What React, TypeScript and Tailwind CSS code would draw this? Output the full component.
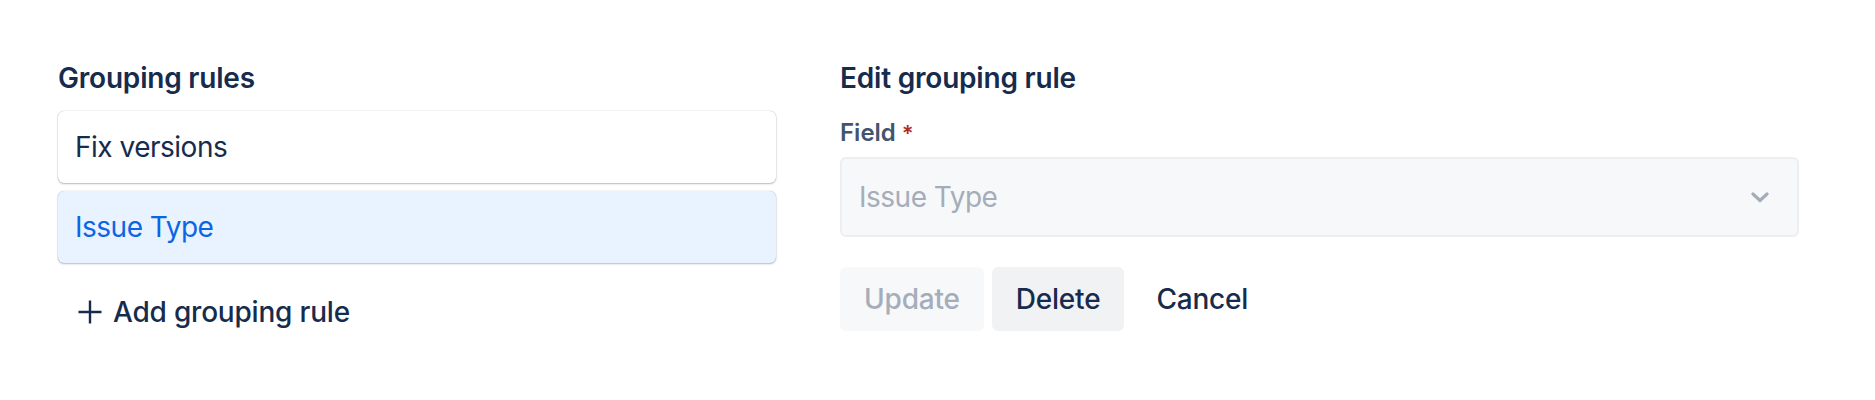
import React from "react";

function PlusIcon() {
  return (
    <svg width="24" height="24" viewBox="0 0 24 24" className="shrink-0">
      <path d="M12 0.5v23M0.5 12h23" stroke="#172B4D" strokeWidth="2.4" strokeLinecap="butt" fill="none" />
    </svg>
  );
}

function Chevron() {
  return (
    <svg width="18" height="11" viewBox="0 0 18 11" className="shrink-0">
      <path d="M2 2l7 6.5L16 2" stroke="#A5ADBA" strokeWidth="3.2" strokeLinecap="round" strokeLinejoin="round" fill="none" />
    </svg>
  );
}

export default function App() {
  return (
    <div
      className="w-[1875px] h-[400px] bg-white text-[#172B4D]"
      style={{ fontFamily: "Inter, 'Noto Sans', sans-serif" }}
    >
      <div className="flex gap-[64px] pl-[58px] pt-[62px]">
        {/* Left column */}
        <div className="w-[718px] flex flex-col">
          <h2 className="text-[28px] leading-[32px] font-semibold tracking-[-0.2px] text-[#172B4D]">Grouping rules</h2>
          <div className="mt-[17px] flex flex-col gap-[8px]">
            <div className="h-[72px] rounded-[6px] bg-white px-[17px] flex items-center shadow-[0_1px_2px_rgba(9,30,66,0.28),0_0_1px_rgba(9,30,66,0.35)]">
              <span className="text-[28px] leading-[40px] tracking-[-0.5px] text-[#172B4D]">Fix versions</span>
            </div>
            <div className="h-[72px] rounded-[6px] bg-[#E9F2FF] px-[17px] flex items-center shadow-[0_1px_2px_rgba(9,30,66,0.28),0_0_1px_rgba(9,30,66,0.35)]">
              <span className="text-[28px] leading-[40px] tracking-[-0.5px] text-[#0C66E4]">Issue Type</span>
            </div>
          </div>
          <div className="mt-[17px] flex">
            <button className="h-[64px] pl-[20px] pr-[20px] flex items-center gap-[11px] rounded-[6px]">
              <PlusIcon />
              <span className="text-[28px] leading-[40px] font-medium tracking-[-0.2px] text-[#172B4D]">Add grouping rule</span>
            </button>
          </div>
        </div>

        {/* Right column */}
        <div className="w-[959px] flex flex-col">
          <h2 className="text-[28px] leading-[32px] font-semibold tracking-[-0.2px] text-[#172B4D]">Edit grouping rule</h2>
          <div className="mt-[23px] flex items-center gap-[6px]">
            <span className="text-[24px] leading-[32px] font-semibold text-[#44546F]">Field</span>
            <span className="text-[22px] leading-[32px] font-semibold text-[#AE2E24]">*</span>
          </div>
          <div className="mt-[8px] h-[80px] rounded-[6px] border-2 border-[#EDEEF0] bg-[#F7F8F9] pl-[17px] pr-[28px] flex items-center justify-between">
            <span className="text-[28px] leading-[40px] tracking-[-0.5px] text-[#A5ADBA]">Issue Type</span>
            <Chevron />
          </div>
          <div className="mt-[30px] flex gap-[8px]">
            <button className="h-[64px] px-[24px] rounded-[6px] bg-[#F7F8F9] text-[28px] leading-[40px] font-medium tracking-[-0.2px] text-[#A5ADBA]">
              Update
            </button>
            <button className="h-[64px] px-[24px] rounded-[6px] bg-[#F1F2F4] text-[28px] leading-[40px] font-medium tracking-[-0.2px] text-[#172B4D]">
              Delete
            </button>
            <button className="h-[64px] px-[24px] rounded-[6px] text-[28px] leading-[40px] font-medium tracking-[-0.2px] text-[#172B4D]">
              Cancel
            </button>
          </div>
        </div>
      </div>
    </div>
  );
}
